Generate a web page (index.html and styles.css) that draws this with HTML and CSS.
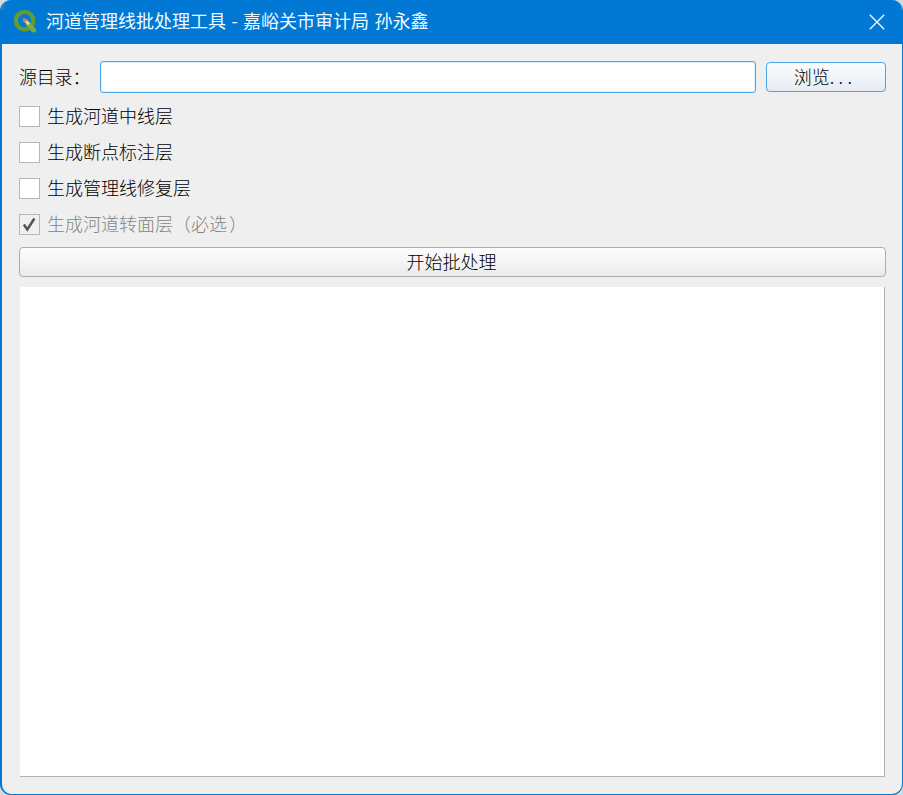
FILE: index.html
```html
<!DOCTYPE html>
<html lang="zh-CN">
<head>
<meta charset="utf-8">
<title>河道管理线批处理工具</title>
<link rel="stylesheet" href="styles.css">
</head>
<body>
<div class="window">
  <header class="titlebar">
    <svg class="logo" viewBox="0 0 24 24" width="24" height="24">
      <circle cx="11.6" cy="11.7" r="8.7" fill="none" stroke="#659c31" stroke-width="4.2"/>
      <path d="M12.5 15.5 15.5 12.5 23 19.8V23.2H19Z" fill="#78ad32"/>
      <path d="M13.5 10.5 17.3 14.2 15 16.2 11.5 13Z" fill="#e9d98a"/>
      <path d="M9.5 9 14 10 14.3 11.3 12 13.6 10.5 13.2Z" fill="#e3794d"/>
    </svg>
    <h1 class="title">河道管理线批处理工具 - 嘉峪关市审计局 孙永鑫</h1>
    <svg class="close" viewBox="0 0 16 16" width="16" height="16"><path d="M.8.8 15.2 15.2M15.2.8.8 15.2" stroke="#e9f8ff" stroke-width="1.4" fill="none"/></svg>
  </header>
  <main class="content">
    <div class="source">
      <label class="label" for="dir">源目录：</label>
      <input class="field" id="dir" type="text">
      <button class="button browse">浏览<span class="dots">...</span></button>
    </div>
    <div class="options">
      <div class="option"><span class="box"></span><span class="text">生成河道中线层</span></div>
      <div class="option"><span class="box"></span><span class="text">生成断点标注层</span></div>
      <div class="option"><span class="box"></span><span class="text">生成管理线修复层</span></div>
      <div class="option disabled"><span class="box"><svg viewBox="0 0 18 18" width="18" height="18"><path d="M3.8 9.5 7.3 14.5 14.4 3.5" fill="none" stroke="#555" stroke-width="2.5"/></svg></span><span class="text">生成河道转面层（必选<span class="paren">）</span></span></div>
    </div>
    <button class="button start">开始批处理</button>
    <div class="log"></div>
  </main>
</div>
</body>
</html>
```
FILE: styles.css
```css
* { box-sizing: border-box; }
body {
  margin: 0;
  height: 795px;
  overflow: hidden;
  background: #d5dadd;
  font: 300 18px/24px "Noto Sans CJK SC", sans-serif;
  color: #000;
}
.window {
  height: 795px;
  display: flex;
  flex-direction: column;
  background: #efefef;
  border: solid #0078d4;
  border-width: 0 1px 1px 2px;
  border-radius: 11px;
  overflow: hidden;
}
.titlebar {
  height: 44px;
  flex: none;
  display: flex;
  align-items: center;
  padding: 0 17px 0 11px;
  background: #0078d4;
}
.logo { flex: none; margin-top: -3px; }
.title {
  flex: 1;
  margin: -4px 0 0 9px;
  font: inherit;
  font-weight: 400;
  color: #eefaff;
  white-space: nowrap;
  word-spacing: 1.4px;
}
.close { flex: none; margin-top: -1px; }
.content {
  flex: 1;
  display: flex;
  flex-direction: column;
  padding: 17px 16px 17px 17px;
}
.source { display: flex; align-items: center; height: 32px; }
.label {
  width: 81px;
  flex: none;
  padding-bottom: 3px;
  letter-spacing: -.2px;
  white-space: nowrap;
}
.field {
  flex: 1;
  min-width: 0;
  height: 32px;
  background: #fff;
  border: 1px solid #49a5e8;
  border-radius: 3px;
  outline: none;
  box-shadow: inset 0 0 0 1px #dff1fd;
}
.button {
  height: 30px;
  padding: 0 2px 3px 0;
  font: inherit;
  color: #000;
  border: 1px solid #adadad;
  border-radius: 4px;
  background: linear-gradient(#fdfdfd, #ebebeb);
}
.browse {
  width: 120px;
  margin-left: 10px;
  border-color: #4da5e9;
  background: linear-gradient(#fafcfd, #e6ecf3);
}
.dots { letter-spacing: 4.3px; }
.options { margin-top: 5px; }
.option { height: 36px; display: flex; align-items: center; }
.text { padding-bottom: 3px; }
.box {
  width: 21px;
  height: 21px;
  margin: 1px 7px 0 0;
  background: #fff;
  border: 1px solid #b7b7b7;
}
.box svg { display: block; }
.paren { margin-left: 2px; }
.disabled { color: #858585; }
.disabled .box { background: #f0f0f0; }
.start { margin-top: 5px; }
.log {
  flex: 1;
  margin: 10px 1px 0;
  background: #fff;
  border: solid #b3b3b3;
  border-width: 0 1px 1px 0;
}
```
